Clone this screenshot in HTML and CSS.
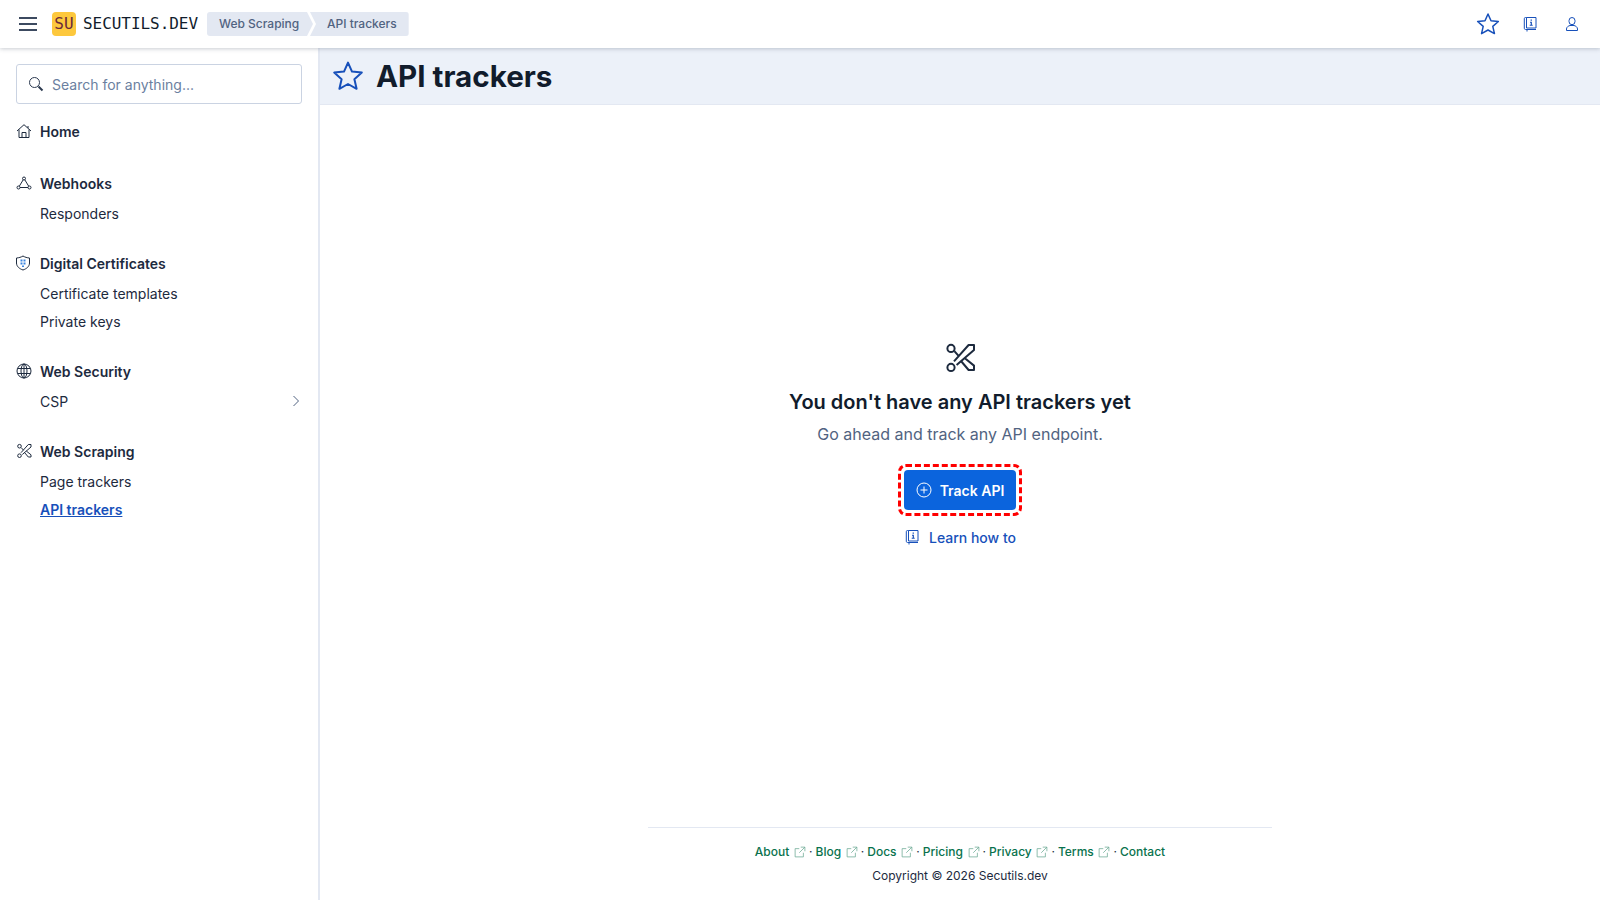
FILE: index.html
```html
<!DOCTYPE html>
<html lang="en">
<head>
<meta charset="utf-8">
<title>API trackers</title>
<link rel="stylesheet" href="styles.css">
</head>
<body>
<svg class="defs" width="0" height="0" aria-hidden="true">
  <symbol id="i-star" viewBox="0 0 16 16"><path fill="none" stroke="currentColor" stroke-linejoin="round" d="M8 1.300l2 4.500 4.900.5-3.700 3.300 1.100 4.800L8 12l-4.300 2.400 1.100-4.800L1.100 6.300 6 5.800z"/></symbol>
  <symbol id="i-book" viewBox="0 0 16 16"><path fill="none" stroke="currentColor" d="M4.500 1.500h9.500v10.500H4.500zM4.500 1.500H3.500a1.200 1.200 0 0 0-1.200 1.200v9.600c0 .7.5 1.200 1.200 1.200H14M5 13.500v2"/><path fill="currentColor" d="M8.600 3.600h1.300v1.200H8.600zM8 5.800h1.900v3h.8v1H7.700v-1h1v-2H8z"/></symbol>
  <symbol id="i-user" viewBox="0 0 16 16"><path fill="none" stroke="currentColor" d="M8 1.500a3 3.200 0 0 1 3 3.200v.8a3 3.200 0 0 1-6 0v-.8a3 3.200 0 0 1 3-3.200zM2.500 14.500v-1.500c0-2 2-3.200 3.500-3.500h4c1.500.3 3.500 1.500 3.500 3.500v1.500z"/></symbol>
  <symbol id="i-search" viewBox="0 0 16 16"><circle cx="6.500" cy="6.500" r="5" fill="none" stroke="currentColor"/><path fill="none" stroke="currentColor" stroke-width="2" d="M10.500 10.500l4 4"/></symbol>
  <symbol id="i-home" viewBox="0 0 16 16"><path fill="none" stroke="currentColor" stroke-linejoin="round" d="M1 8l7-6.300L15 8M3 6.500v8h10v-8M6 14.500v-5h4v5M12 3v2"/></symbol>
  <symbol id="i-webhook" viewBox="0 0 16 16"><g fill="none" stroke="currentColor"><circle cx="8" cy="3.500" r="1.500"/><circle cx="2.500" cy="12.500" r="1.500"/><circle cx="13.500" cy="12.500" r="1.500"/><path d="M4 12.500h8M7.200 4.800l-3.900 6.400M8.800 4.800l3.900 6.400"/></g></symbol>
  <symbol id="i-shield" viewBox="0 0 16 16"><path fill="none" stroke="#1d2a3e" d="M7 1c2 1.200 4 1.800 6.500 2v5c0 3.500-3 5.800-6.500 7-3.500-1.200-6.500-3.500-6.500-7V3C3 2.800 5 2.200 7 1z"/><path fill="#3d86e0" d="M4.500 4.500h2v2h-2zM7.500 4.500h2v2h-2zM4.500 7.500h2v2h-2zM7.500 7.500h2v2h-2zM6 10.500h2V12H6z"/></symbol>
  <symbol id="i-globe" viewBox="0 0 16 16"><g fill="none" stroke="currentColor"><circle cx="8" cy="8" r="7"/><ellipse cx="8" cy="8" rx="3" ry="7"/><path d="M8 1v14M1.500 5.500h13M1.500 10.500h13"/></g></symbol>
  <symbol id="i-scissors" viewBox="0 0 16 16"><g fill="none" stroke="currentColor" stroke-linejoin="round"><circle cx="3.500" cy="3.200" r="1.800"/><circle cx="3.500" cy="12.700" r="1.800"/><path d="M5 9.700L12.300 1.500H15V4L6.300 11.500M5.200 4.600l2.300 2.600M8.500 9.500l3.800 4.500H15v-2.200L10.300 8"/></g></symbol>
  <symbol id="i-chevron" viewBox="0 0 16 16"><path fill="none" stroke="currentColor" d="M5.500 3l5 5-5 5"/></symbol>
  <symbol id="i-plus" viewBox="0 0 16 16"><g fill="none" stroke="currentColor"><circle cx="8" cy="8" r="7"/><path d="M8 4.500v7M4.500 8h7"/></g></symbol>
  <symbol id="i-ext" viewBox="0 0 16 16"><path fill="none" stroke="currentColor" d="M12.500 9v5.500h-11v-11H7M9 1.500h5.500V7M14.500 1.500L7 9"/></symbol>
</svg>

<header class="topbar">
  <button class="menu-btn" aria-label="Menu"><span></span><span></span><span></span></button>
  <div class="logo">SU</div>
  <div class="brand">SECUTILS.DEV</div>
  <nav class="crumbs">
    <span class="crumb crumb-first">Web Scraping</span>
    <span class="crumb crumb-last">API trackers</span>
  </nav>
  <div class="top-actions">
    <svg class="ic-star-top"><use href="#i-star"/></svg>
    <svg class="ic-top"><use href="#i-book"/></svg>
    <svg class="ic-top"><use href="#i-user"/></svg>
  </div>
</header>

<div class="shell">
  <aside class="sidebar">
    <div class="search">
      <svg class="ic-search"><use href="#i-search"/></svg>
      <span>Search for anything...</span>
    </div>
    <section class="group group-home">
      <div class="group-title"><svg class="ic-nav"><use href="#i-home"/></svg>Home</div>
    </section>
    <section class="group">
      <div class="group-title"><svg class="ic-nav"><use href="#i-webhook"/></svg>Webhooks</div>
      <a class="item">Responders</a>
    </section>
    <section class="group">
      <div class="group-title"><svg class="ic-nav"><use href="#i-shield"/></svg>Digital Certificates</div>
      <a class="item">Certificate templates</a>
      <a class="item">Private keys</a>
    </section>
    <section class="group">
      <div class="group-title"><svg class="ic-nav"><use href="#i-globe"/></svg>Web Security</div>
      <a class="item item-more">CSP<svg class="ic-chevron"><use href="#i-chevron"/></svg></a>
    </section>
    <section class="group">
      <div class="group-title"><svg class="ic-nav"><use href="#i-scissors"/></svg>Web Scraping</div>
      <a class="item">Page trackers</a>
      <a class="item item-active">API trackers</a>
    </section>
  </aside>

  <main class="main">
    <div class="page-head">
      <svg class="ic-page"><use href="#i-star"/></svg>
      <h1>API trackers</h1>
    </div>
    <div class="content">
      <div class="empty">
        <svg class="ic-empty"><use href="#i-scissors"/></svg>
        <h2>You don't have any API trackers yet</h2>
        <p>Go ahead and track any API endpoint.</p>
        <div class="outline">
          <button class="primary"><svg class="ic-plus"><use href="#i-plus"/></svg>Track API</button>
        </div>
        <a class="learn"><svg class="ic-learn"><use href="#i-book"/></svg>Learn how to</a>
      </div>
    </div>
    <footer class="footer">
      <div class="foot-links">
        <a>About<svg class="ic-ext"><use href="#i-ext"/></svg></a><span class="dot">·</span>
        <a>Blog<svg class="ic-ext"><use href="#i-ext"/></svg></a><span class="dot">·</span>
        <a>Docs<svg class="ic-ext"><use href="#i-ext"/></svg></a><span class="dot">·</span>
        <a>Pricing<svg class="ic-ext"><use href="#i-ext"/></svg></a><span class="dot">·</span>
        <a>Privacy<svg class="ic-ext"><use href="#i-ext"/></svg></a><span class="dot">·</span>
        <a>Terms<svg class="ic-ext"><use href="#i-ext"/></svg></a><span class="dot">·</span>
        <a>Contact</a>
      </div>
      <div class="copy">Copyright © 2026 Secutils.dev</div>
    </footer>
  </main>
</div>
</body>
</html>
```
FILE: styles.css
```css
* { box-sizing: border-box; }
html, body { margin: 0; height: 100%; }
body {
  font-family: Inter, "Liberation Sans", sans-serif;
  color: #1d2a3e;
  background: #fff;
  height: 900px;
  overflow: hidden;
  display: flex;
  flex-direction: column;
}
.defs { display: block; height: 0; }
svg { display: block; flex: none; }

.topbar {
  height: 48px;
  flex: none;
  display: flex;
  align-items: center;
  background: #fff;
  box-shadow: 0 1px 4px rgba(43, 57, 79, .25);
  padding-left: 19px;
  position: relative;
  z-index: 2;
}
.menu-btn {
  width: 18px;
  height: 14px;
  padding: 0;
  border: 0;
  background: none;
  display: flex;
  flex-direction: column;
  justify-content: space-between;
}
.menu-btn span { display: block; height: 2px; background: #3c4a60; }
.logo {
  width: 24px;
  height: 24px;
  margin-left: 15px;
  border-radius: 4px;
  background: #fdc83d;
  color: #6b2a3a;
  font: 16px/24px "DejaVu Sans Mono", monospace;
  text-align: center;
}
.brand {
  margin-left: 7px;
  width: 113px;
  font: 16px/24px "DejaVu Sans Mono", monospace;
  letter-spacing: -.05px;
  color: #111c2c;
}
.crumbs { display: flex; margin-left: 11px; }
.crumb {
  height: 24px;
  background: #e3e8f2;
  color: #516381;
  font-size: 12px;
  font-weight: 500;
  line-height: 24px;
}
.crumb-first {
  padding: 0 12px;
  border-radius: 3px 0 0 3px;
  clip-path: polygon(0 0, calc(100% - 6px) 0, 100% 50%, calc(100% - 6px) 100%, 0 100%);
  width: 106px;
}
.crumb-last {
  margin-left: -3px;
  padding: 0 12px 0 17px;
  border-radius: 0 3px 3px 0;
  clip-path: polygon(0 0, 100% 0, 100% 100%, 0 100%, 6px 50%);
}
.top-actions {
  margin-left: auto;
  display: flex;
  align-items: center;
  gap: 26px;
  padding-right: 20px;
  color: #1750ba;
}
.ic-star-top { width: 24px; height: 24px; margin-right: -4px; }
.ic-top { width: 16px; height: 16px; }

.shell { flex: 1; display: flex; min-height: 0; }
.sidebar {
  width: 320px;
  flex: none;
  padding: 16px 16px 0;
  border-right: 2px solid #e3e8f2;
}
.search {
  height: 40px;
  width: 286px;
  display: flex;
  align-items: center;
  gap: 8px;
  padding-left: 11px;
  border: 1px solid #cad3e2;
  border-radius: 3px;
  color: #6b7fa0;
  font-size: 14px;
}
.ic-search { width: 16px; height: 16px; color: #2b394f; }
.group { margin-top: 24px; }
.group-home { margin-top: 15px; margin-bottom: 28px; }
.group-title {
  display: flex;
  align-items: center;
  gap: 8px;
  height: 24px;
  font-size: 14px;
  font-weight: 600;
  color: #1d2a3e;
  padding-left: 0;
}
.ic-nav { width: 16px; height: 16px; color: #1d2a3e; }
.item {
  display: flex;
  align-items: center;
  justify-content: space-between;
  height: 28px;
  padding-left: 24px;
  font-size: 14px;
  color: #1d2a3e;
}
.group-title + .item { margin-top: 4px; }
.item-active { color: #1750ba; font-weight: 600; text-decoration: underline; }
.ic-chevron { width: 16px; height: 16px; color: #516381; margin-right: -2px; }

.main { flex: 1; min-width: 0; display: flex; flex-direction: column; }
.page-head {
  height: 57px;
  flex: none;
  display: flex;
  align-items: center;
  gap: 12px;
  padding-left: 12px;
  background: #ecf1f9;
  border-bottom: 1px solid #e3e8f2;
}
.ic-page { width: 32px; height: 32px; color: #1750ba; }
h1 { margin: 0; font-size: 29.600px; line-height: 40px; font-weight: 700; color: #111c2c; }

.content { flex: 1; display: flex; flex-direction: column; align-items: center; padding-top: 237px; }
.empty { display: flex; flex-direction: column; align-items: center; }
.ic-empty { width: 32px; height: 32px; color: #1d2a3e; }
h2 { margin: 14px 0 0; font-size: 20px; line-height: 28px; font-weight: 600; color: #111c2c; }
.empty p { margin: 6px 0 0; font-size: 16px; line-height: 24px; color: #516381; }
.outline {
  margin-top: 18px;
  padding: 3px;
  border: 3px dashed #f00;
  border-radius: 8px;
}
.primary {
  display: flex;
  align-items: center;
  gap: 8px;
  height: 40px;
  padding: 0 12px;
  border: 0;
  border-radius: 4px;
  background: #0b64dd;
  color: #fff;
  font: 600 14px Inter, sans-serif;
}
.ic-plus { width: 16px; height: 16px; }
.learn {
  display: flex;
  align-items: center;
  gap: 9px;
  height: 24px;
  margin-top: 9px;
  font-size: 14px;
  font-weight: 500;
  color: #1750ba;
}
.ic-learn { width: 16px; height: 16px; }

.footer {
  width: 624px;
  align-self: center;
  border-top: 1px solid #e3e8f2;
  padding-top: 16px;
  height: 73px;
  flex: none;
  text-align: center;
  font-size: 12px;
}
.foot-links { display: flex; justify-content: center; align-items: center; gap: 3px; line-height: 16px; color: #1d2a3e; }
.foot-links a { display: flex; align-items: center; gap: 4.700px; color: #09724d; font-weight: 500; }
.ic-ext { width: 12px; height: 12px; opacity: .6; }
.copy { margin-top: 8px; line-height: 16px; }
```
